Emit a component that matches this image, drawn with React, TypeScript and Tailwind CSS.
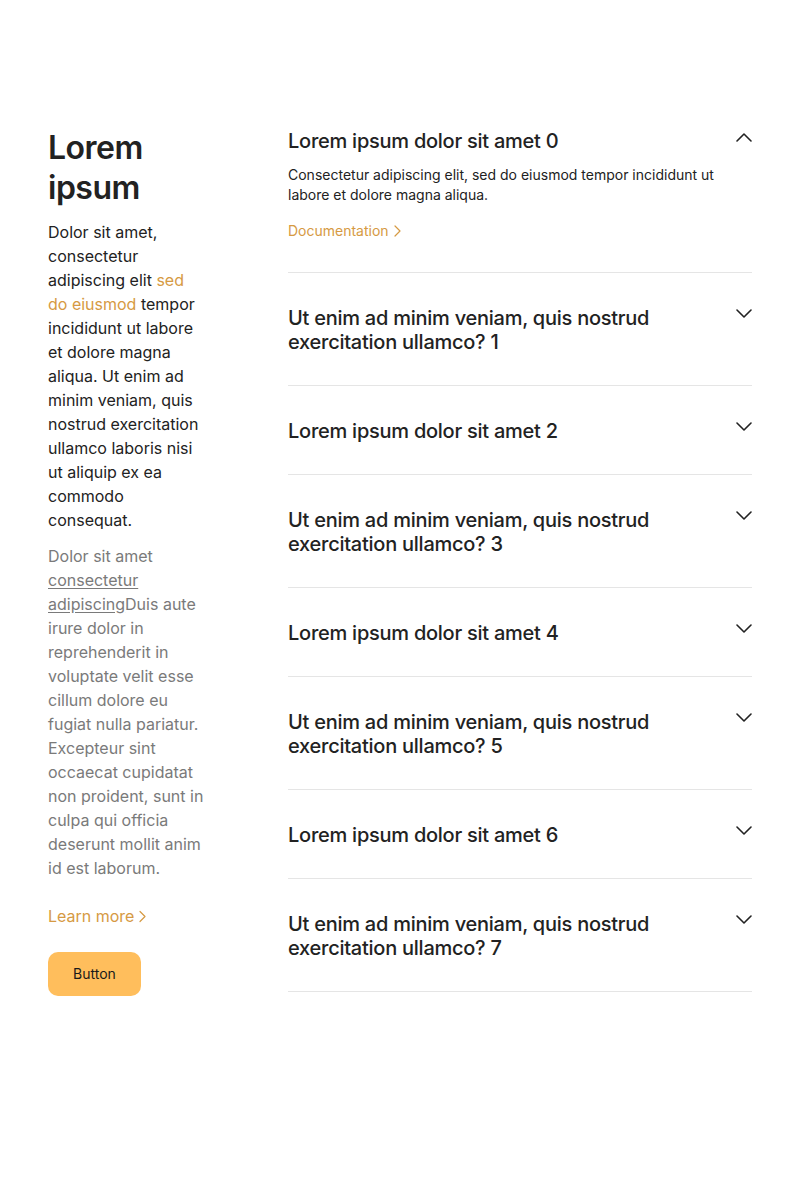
import React from "react";

const font = { fontFamily: 'Inter, "Liberation Sans", Arial, sans-serif' };

function ChevronDown({ up = false }: { up?: boolean }) {
  return (
    <svg width="16" height="10" viewBox="0 0 16 10" fill="none" className="shrink-0 mt-[3px]">
      <path
        d={up ? "M1 9 L8 2 L15 9" : "M1 1 L8 8 L15 1"}
        stroke="#222222"
        strokeWidth="1.6"
        strokeLinecap="round"
        strokeLinejoin="round"
      />
    </svg>
  );
}

function ChevronRight({ h = 12 }: { h?: number }) {
  return (
    <svg width="7" height={h} viewBox="0 0 7 12" fill="none" className="inline-block ml-[5px]">
      <path d="M1 1 L6 6 L1 11" stroke="currentColor" strokeWidth="1.2" strokeLinecap="round" strokeLinejoin="round" />
    </svg>
  );
}

const items = [
  "Lorem ipsum dolor sit amet 0",
  "Ut enim ad minim veniam, quis nostrud exercitation ullamco? 1",
  "Lorem ipsum dolor sit amet 2",
  "Ut enim ad minim veniam, quis nostrud exercitation ullamco? 3",
  "Lorem ipsum dolor sit amet 4",
  "Ut enim ad minim veniam, quis nostrud exercitation ullamco? 5",
  "Lorem ipsum dolor sit amet 6",
  "Ut enim ad minim veniam, quis nostrud exercitation ullamco? 7",
];

export default function App() {
  return (
    <div className="w-[800px] min-h-[1196px] bg-white text-[#222222]" style={font}>
      <div className="grid grid-cols-[160px_464px] gap-x-[80px] px-[48px] pt-[128px]">
        <div>
          <h1 className="text-[32px] leading-[40px] font-semibold tracking-[-0.5px]">Lorem ipsum</h1>
          <p className="mt-[12px] max-w-[156px] text-[16px] leading-[24px]">
            Dolor sit amet, consectetur adipiscing elit{" "}
            <span className="text-[#d69a43]">sed do eiusmod</span> tempor incididunt ut labore et dolore magna aliqua. Ut
            enim ad minim veniam, quis nostrud exercitation ullamco laboris nisi ut aliquip ex ea commodo consequat.
          </p>
          <p className="mt-[12px] text-[16px] leading-[24px] text-[#7a7a7a]">
            Dolor sit amet <span className="underline underline-offset-2">consectetur adipiscing</span>Duis aute irure
            dolor in reprehenderit in voluptate velit esse cillum dolore eu fugiat nulla pariatur. Excepteur sint
            occaecat cupidatat non proident, sunt in culpa qui officia deserunt mollit anim id est laborum.
          </p>
          <a className="mt-[24px] flex items-center text-[16px] leading-[24px] text-[#d69a43]">
            Learn more
            <ChevronRight h={13} />
          </a>
          <button className="mt-[24px] w-[93px] h-[44px] rounded-[10px] bg-[#ffbe5c] text-[14px] leading-[20px] text-[#1a1a1a]">
            Button
          </button>
        </div>
        <div>
          {items.map((t, i) => (
            <div key={i} className={`border-b border-[#e5e5e5] ${i === 0 ? "pt-[1px]" : "pt-[33px]"} pb-[31px]`}>
              <div className="flex justify-between gap-6">
                <h3 className="text-[20px] leading-[24px] font-medium tracking-[-0.25px] max-w-[390px]">{t}</h3>
                <ChevronDown up={i === 0} />
              </div>
              {i === 0 && (
                <div>
                  <p className="mt-[12px] text-[14px] leading-[20px]">
                    Consectetur adipiscing elit, sed do eiusmod tempor incididunt ut labore et dolore magna aliqua.
                  </p>
                  <a className="mt-[16px] flex items-center text-[14px] leading-[20px] text-[#d69a43]">
                    Documentation
                    <ChevronRight />
                  </a>
                </div>
              )}
            </div>
          ))}
        </div>
      </div>
    </div>
  );
}
